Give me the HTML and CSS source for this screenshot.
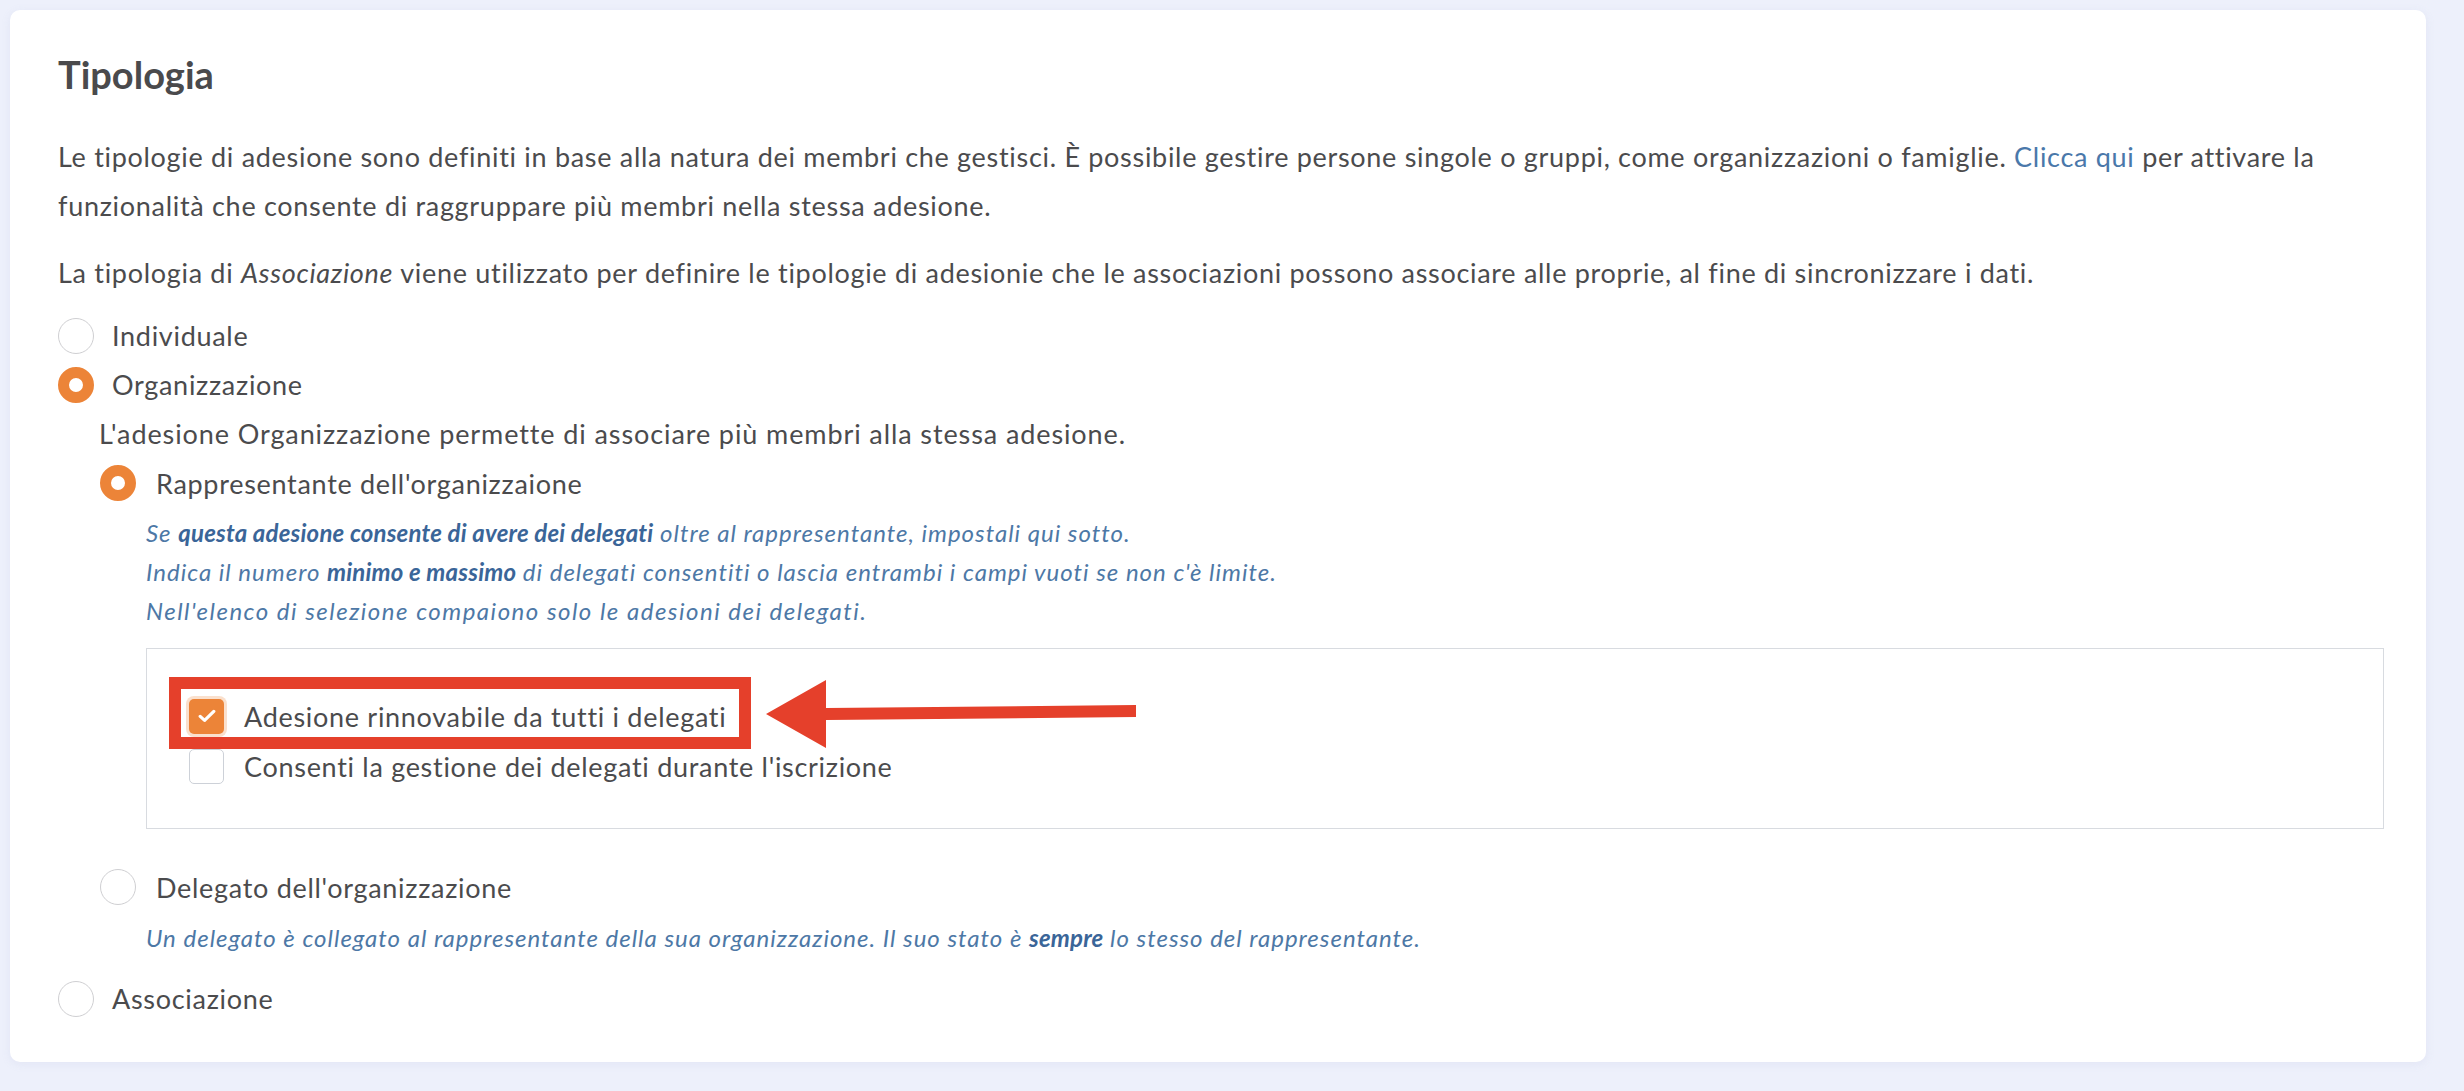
FILE: index.html
```html
<!DOCTYPE html>
<html lang="it">
<head>
<meta charset="utf-8">
<title>Tipologia</title>
<link rel="stylesheet" href="styles.css">
</head>
<body>
<div class="page">
  <section class="card">
    <h2 class="title">Tipologia</h2>
    <p class="para para-first">Le tipologie di adesione sono definiti in base alla natura dei membri che gestisci. È possibile gestire persone singole o gruppi, come organizzazioni o famiglie. <a class="link" href="#">Clicca qui</a> per attivare la<br>funzionalità che consente di raggruppare più membri nella stessa adesione.</p>
    <p class="para para-second">La tipologia di <em>Associazione</em> viene utilizzato per definire le tipologie di adesionie che le associazioni possono associare alle proprie, al fine di sincronizzare i dati.</p>

    <div class="options">
      <div class="option">
        <span class="radio"></span><span class="label">Individuale</span>
      </div>
      <div class="option">
        <span class="radio checked"></span><span class="label">Organizzazione</span>
      </div>
      <div class="org">
        <p class="org-desc">L'adesione Organizzazione permette di associare più membri alla stessa adesione.</p>
        <div class="option sub">
          <span class="radio checked"></span><span class="label">Rappresentante dell'organizzaione</span>
        </div>
        <div class="help help-block">
          <p>Se <strong>questa adesione consente di avere dei delegati</strong> oltre al rappresentante, impostali qui sotto.</p>
          <p>Indica il numero <strong>minimo e massimo</strong> di delegati consentiti o lascia entrambi i campi vuoti se non c'è limite.</p>
          <p class="wide">Nell'elenco di selezione compaiono solo le adesioni dei delegati.</p>
        </div>
        <div class="box">
          <div class="check-row">
            <span class="checkbox checked">
              <svg viewBox="0 0 18 14" width="18" height="14"><path d="M2.2 7.4 L6.6 11.4 L15.8 2.4" fill="none" stroke="#fff" stroke-width="3.2" stroke-linecap="round" stroke-linejoin="round"/></svg>
            </span>
            <span class="label">Adesione rinnovabile da tutti i delegati</span>
          </div>
          <div class="check-row">
            <span class="checkbox"></span>
            <span class="label">Consenti la gestione dei delegati durante l'iscrizione</span>
          </div>
          <div class="highlight"></div>
          <svg class="arrow" viewBox="0 0 370 70" width="370" height="70">
            <path d="M0 34 L60 0 L60 28 L370 25 L370 37 L60 40 L60 68 Z" fill="#e5402b"/>
          </svg>
        </div>
        <div class="option sub sub-delegato">
          <span class="radio"></span><span class="label">Delegato dell'organizzazione</span>
        </div>
        <div class="help help-single">
          <p>Un delegato è collegato al rappresentante della sua organizzazione. Il suo stato è <strong>sempre</strong> lo stesso del rappresentante.</p>
        </div>
      </div>
      <div class="option option-last">
        <span class="radio"></span><span class="label">Associazione</span>
      </div>
    </div>
  </section>
</div>
</body>
</html>
```

FILE: styles.css
```css
html, body {
  margin: 0;
  padding: 0;
}

body {
  background: #eef1fb;
  font-family: "Lato", "Noto Sans", sans-serif;
  color: #4b4b4d;
}

.page {
  box-sizing: border-box;
  height: 1091px;
  padding: 10px 38px 29px 10px;
  background: #edf0fb;
}

.card {
  box-sizing: border-box;
  height: 1052px;
  background: #ffffff;
  border-radius: 10px;
  padding: 40px 48px 0 48px;
  box-shadow: 0 2px 10px rgba(150, 160, 200, 0.12);
}

.title {
  margin: 0;
  font-size: 38px;
  line-height: 48px;
  font-weight: 700;
  color: #4a4a4c;
}

.para {
  margin: 0;
  font-size: 27px;
  letter-spacing: 0.7px;
  line-height: 49px;
}

.para-first {
  margin-top: 34px;
}

.para-second {
  margin-top: 18px;
}

.para em {
  font-style: italic;
}

.link {
  color: #4a78aa;
  text-decoration: none;
}

.options {
  margin-top: 14px;
}

.option {
  display: flex;
  align-items: center;
  height: 49px;
  font-size: 27px;
  letter-spacing: 0.7px;
}

.option .label {
  margin-left: 18px;
}

.radio {
  box-sizing: border-box;
  flex: none;
  width: 36px;
  height: 36px;
  border-radius: 50%;
  border: 1.5px solid #cfcfd2;
  background: #fff;
}

.radio.checked {
  border: 11px solid #ec8438;
  background: #fff;
}

.org {
  padding-left: 41px;
}

.org-desc {
  margin: 0;
  font-size: 27px;
  letter-spacing: 0.9px;
  line-height: 49px;
}

.option.sub {
  padding-left: 1px;
  height: 50px;
}

.option.sub .label {
  margin-left: 20px;
}

.help {
  padding-left: 47px;
  color: #4d78a6;
  font-style: italic;
  font-size: 24px;
  letter-spacing: 1px;
  line-height: 39px;
}

.help p {
  margin: 0;
}

.help p.wide {
  letter-spacing: 1.5px;
}

.help strong {
  font-weight: 700;
  color: #3a6598;
  letter-spacing: 0.2px;
}

.help-block {
  margin-top: 5px;
}

.box {
  position: relative;
  box-sizing: border-box;
  margin: 18px 0 0 47px;
  width: 2238px;
  height: 181px;
  border: 1.5px solid #d8dbe0;
  padding: 42px 0 0 42px;
}

.check-row {
  display: flex;
  align-items: center;
  height: 50px;
  font-size: 27px;
  letter-spacing: 0.7px;
}

.check-row .label {
  margin-left: 20px;
}

.checkbox {
  box-sizing: border-box;
  flex: none;
  width: 35px;
  height: 35px;
  border-radius: 5px;
  border: 1.5px solid #cdd1d8;
  background: #fff;
  display: flex;
  align-items: center;
  justify-content: center;
}

.checkbox.checked {
  border: none;
  background: #ec8438;
  box-shadow: 0 0 0 3px rgba(236, 132, 56, 0.25);
}

.highlight {
  position: absolute;
  left: 22px;
  top: 28px;
  width: 582px;
  height: 72px;
  box-sizing: border-box;
  border: 12px solid #e5402b;
}

.arrow {
  position: absolute;
  left: 619px;
  top: 31px;
}

.sub-delegato {
  margin-top: 33px;
}

.help-single {
  margin-top: 6px;
}

.option-last {
  margin-top: 17px;
}
```
